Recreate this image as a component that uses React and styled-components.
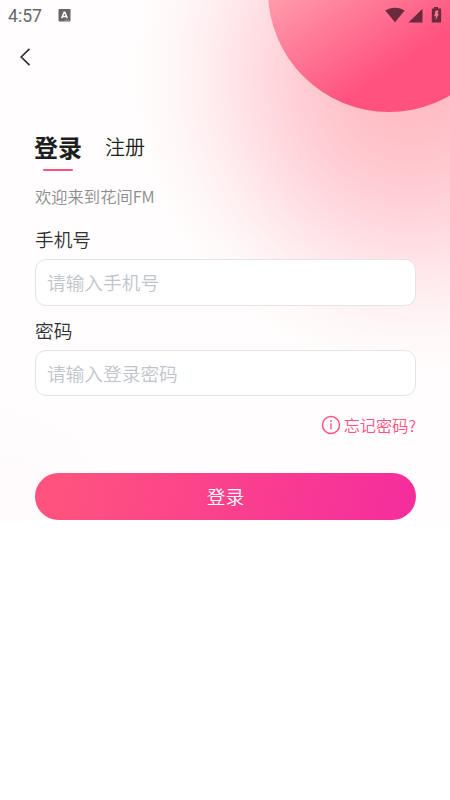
import React, { useState } from 'react';
import styled, { createGlobalStyle } from 'styled-components';

const GlobalStyle = createGlobalStyle`
  * {
    box-sizing: border-box;
  }

  body {
    margin: 0;
    background: #ffffff;
    font-family: "Noto Sans CJK SC", sans-serif;
    font-weight: 350;
  }
`;

const Page = styled.div`
  position: relative;
  height: 800px;
  overflow: hidden;
  background: #ffffff;
`;

const Backdrop = styled.div`
  position: absolute;
  top: 0;
  left: 0;
  right: 0;
  height: 520px;
  overflow: hidden;
  background:
    radial-gradient(ellipse 295px 315px at 412px 75px, #ffbac3 0%, #ffbec6 15%, #ffc5cd 27%, #ffcfd6 39%, #ffdce1 52%, #ffe6ea 62%, #fff0f2 72%, #fff8f8 83%, #fffdfd 94%, rgba(255, 253, 254, 0) 100%),
    radial-gradient(circle 130px at 0 520px, #fffafb 0%, #fffdfe 100%);
`;

const Ball = styled.div`
  position: absolute;
  top: -130px;
  left: 268px;
  width: 242px;
  height: 242px;
  border-radius: 50%;
  background: linear-gradient(146deg, #ff9cac 32%, #ff527f 70%);
`;

const Content = styled.div`
  position: relative;
  display: flex;
  flex-direction: column;
`;

const StatusBar = styled.div`
  display: flex;
  align-items: center;
  justify-content: space-between;
  height: 31px;
  padding: 0 8px;
`;

const StatusGroup = styled.div`
  display: flex;
  align-items: center;
`;

const Clock = styled.span`
  width: 50px;
  font-family: Roboto, sans-serif;
  font-size: 17.6px;
  font-weight: 400;
  line-height: 31px;
  padding-top: 1px;
  color: #666666;
`;

const NavBar = styled.div`
  display: flex;
  align-items: center;
  height: 51px;
  padding-left: 17px;
`;

const BackButton = styled.button`
  display: flex;
  padding: 0;
  border: none;
  background: none;
  cursor: pointer;
`;

const Main = styled.main`
  display: flex;
  flex-direction: column;
  padding: 47px 34px 0 35px;
`;

const Tabs = styled.div`
  display: flex;
  gap: 23px;
  height: 42px;
  margin-left: -1px;
`;

const Tab = styled.button`
  display: flex;
  flex-direction: column;
  align-items: center;
  padding: 0;
  border: none;
  background: none;
  font-family: inherit;
  font-size: ${(props) => (props.$active ? '24px' : '20px')};
  font-weight: ${(props) => (props.$active ? 700 : 350)};
  line-height: 36px;
  color: #1d1e20;
  cursor: pointer;

  &::after {
    content: "";
    width: 30px;
    height: 2px;
    margin: 4px 1px 0 0;
    border-radius: 1px;
    background: ${(props) => (props.$active ? '#ff527f' : 'transparent')};
  }
`;

const Welcome = styled.p`
  margin: 13px 0 0;
  font-size: 16.3px;
  line-height: 24px;
  color: #8c8c8c;
`;

const Form = styled.form`
  display: flex;
  flex-direction: column;
`;

const Field = styled.label`
  display: flex;
  flex-direction: column;
  margin-top: ${(props) => props.$gap};
  font-size: 18.7px;
  line-height: 28px;
  color: #303133;
`;

const Input = styled.input`
  height: ${(props) => props.$height};
  margin-top: 6px;
  padding: 0 11px 2px;
  border: 1px solid #e3e4e8;
  border-radius: 11px;
  outline: none;
  background: #ffffff;
  font-family: inherit;
  font-size: 18.7px;
  font-weight: inherit;
  color: #303133;

  &::placeholder {
    color: #c0c4cc;
    opacity: 1;
  }
`;

const Forgot = styled.a`
  display: flex;
  align-items: center;
  align-self: flex-end;
  gap: 3px;
  margin-top: 17px;
  font-size: 16.2px;
  line-height: 24px;
  color: #ff527f;
  cursor: pointer;
`;

const SubmitButton = styled.button`
  height: 47.5px;
  margin-top: 35.5px;
  padding: 0 0 2px;
  border: none;
  border-radius: 24px;
  background: linear-gradient(100deg, #ff527f 8%, #f52e9c 96%);
  font-family: inherit;
  font-size: 18.7px;
  font-weight: inherit;
  color: #ffffff;
  cursor: pointer;
`;

const KeyboardIcon = () => (
  <svg width="13" height="13" viewBox="0 0 13 13">
    <rect x="0.5" y="0" width="12" height="12.5" rx="1" fill="#666666" />
    <path d="M3.7 9.2L6.1 3.2h.8L9.3 9.2M4.6 7.4h3.6" fill="none" stroke="#ffffff" strokeWidth="1.5" />
    <path d="M6.5 11.2h1M8.3 11.2h1M10.1 11.2h1" stroke="#d0d0d0" strokeWidth="0.8" />
  </svg>
);

const SignalIcons = () => (
  <svg width="58" height="18" viewBox="0 0 58 18" fill="#6b2a3b">
    <path d="M1.3 3.6C6.5 -0.3 15.5 -0.3 20.7 3.6L11 15.2z" />
    <path d="M38.5 1.8V15.5H24.5z" />
    <path d="M50 0h4v1.4h2.1c.6 0 1 .4 1 1v12.2c0 .6-.4 1-1 1h-7.3c-.6 0-1-.4-1-1V2.4c0-.6.4-1 1-1H50z" />
    <path d="M51.6 3.6H54.6L53.5 6.7H55L51.6 13.2L52 9.2H50.2z" fill="#ff718f" />
  </svg>
);

const BackIcon = () => (
  <svg width="18" height="22" viewBox="0 0 18 22" fill="none">
    <path d="M12.5 2.8L4.2 11L12.5 19.2" stroke="#303133" strokeWidth="1.7" />
  </svg>
);

const InfoIcon = () => (
  <svg width="20" height="20" viewBox="0 0 20 20" fill="none">
    <circle cx="10" cy="10" r="8.5" stroke="#ff527f" strokeWidth="1.5" />
    <circle cx="10" cy="6" r="0.9" fill="#ff527f" />
    <path d="M10 8.3V14.5" stroke="#ff527f" strokeWidth="1.3" />
  </svg>
);

const App = () => {
  const [mode, setMode] = useState('login');
  const [credentials, setCredentials] = useState({ phone: '', password: '' });

  const onChange = (e) => {
    setCredentials({ ...credentials, [e.target.name]: e.target.value });
  };

  const handleSubmit = (e) => {
    e.preventDefault();
  };

  return (
    <Page>
      <GlobalStyle />
      <Backdrop>
        <Ball />
      </Backdrop>
      <Content>
        <StatusBar>
          <StatusGroup>
            <Clock>4:57</Clock>
            <KeyboardIcon />
          </StatusGroup>
          <SignalIcons />
        </StatusBar>
        <NavBar>
          <BackButton type="button" aria-label="返回">
            <BackIcon />
          </BackButton>
        </NavBar>
        <Main>
          <Tabs>
            <Tab type="button" $active={mode === 'login'} onClick={() => setMode('login')}>登录</Tab>
            <Tab type="button" $active={mode === 'register'} onClick={() => setMode('register')}>注册</Tab>
          </Tabs>
          <Welcome>欢迎来到花间FM</Welcome>
          <Form onSubmit={handleSubmit}>
            <Field $gap="17px">
              手机号
              <Input
                type="tel"
                name="phone"
                placeholder="请输入手机号"
                $height="47px"
                value={credentials.phone}
                onChange={onChange}
              />
            </Field>
            <Field $gap="10px">
              密码
              <Input
                type="password"
                name="password"
                placeholder="请输入登录密码"
                $height="46px"
                value={credentials.password}
                onChange={onChange}
              />
            </Field>
            <Forgot>
              <InfoIcon />
              忘记密码?
            </Forgot>
            <SubmitButton type="submit">登录</SubmitButton>
          </Form>
        </Main>
      </Content>
    </Page>
  );
};

export default App;
